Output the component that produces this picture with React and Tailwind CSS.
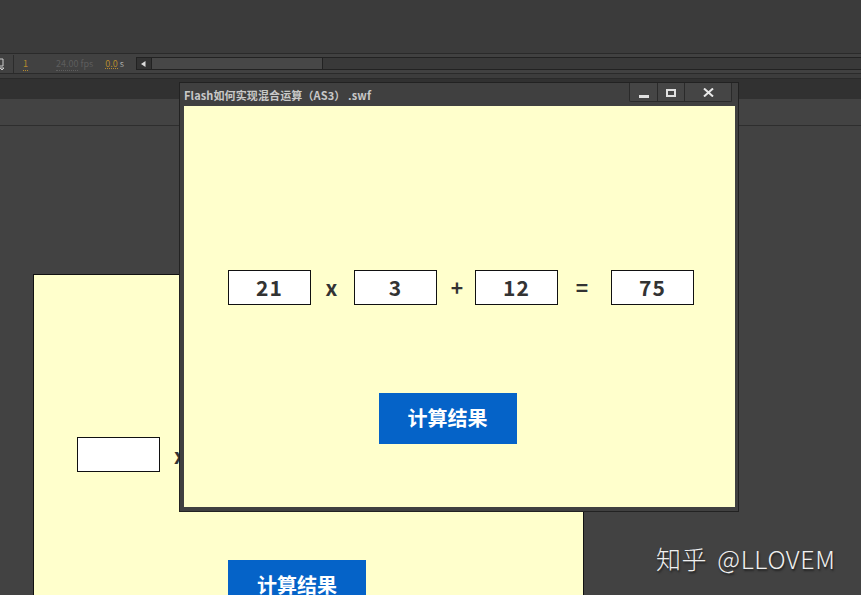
const SANS = 'font-["Noto_Sans_CJK_SC","Noto_Sans",sans-serif]';

function Field({ value, className = "" }) {
  return (
    <div className={`w-[83px] h-[35px] bg-white border border-[#111] flex items-center justify-center text-[21px] font-bold text-[#333] tracking-[1px] leading-none ${className}`}>
      {value}
    </div>
  );
}

function Op({ children, className = "" }) {
  return <div className={`text-[21px] font-bold text-[#333] leading-none text-center ${className}`}>{children}</div>;
}

function Calc() {
  return (
    <button className="w-[138px] h-[51px] pb-[2px] bg-[#0563c8] text-white text-[20px] font-bold flex items-center justify-center leading-none">
      计算结果
    </button>
  );
}

export default function App() {
  return (
    <div className={`relative w-[861px] h-[595px] overflow-hidden bg-[#424242] ${SANS}`}>
      {/* Application chrome */}
      <div className="h-[53px] bg-[#3b3b3b]" />
      <div className="h-[21px] bg-[#414141] border-y border-[#2a2a2a] flex items-center text-[9px] leading-none">
        <svg width="6" height="14" viewBox="0 0 6 14" className="ml-0 text-[#ccc]">
          <path d="M0 2h3v7H0M0 11h4l-2 2z" fill="none" stroke="currentColor" />
        </svg>
        <div className="ml-[7px] w-px h-[18px] bg-[#2c2c2c]" />
        <span className="ml-[9px] w-[33px] text-[#b58a2e]"><span className="border-b border-dotted border-[#b58a2e]">1</span></span>
        <span className="text-[#5d5d5d]"><span className="border-b border-dotted border-[#5d5d5d]">24.00</span> fps</span>
        <span className="ml-[12px] text-[#b58a2e] border-b border-dotted border-[#b58a2e]">0.0</span>
        <span className="ml-[2px] text-[#aaa]">s</span>
        <div className="ml-[12px] flex-1 h-[13px] flex bg-[#393939] border-y border-[#222]">
          <div className="w-[15px] bg-[#333] flex items-center justify-center border-l border-[#222]">
            <svg width="5" height="6" viewBox="0 0 5 6"><path d="M4.5 0v6L0 3z" fill="#ddd" /></svg>
          </div>
          <div className="w-[172px] bg-[#474747] border-x border-[#222]" />
        </div>
      </div>
      <div className="h-[5px] bg-[#3c3c3c] border-b border-[#2a2a2a]" />
      <div className="h-[20px] bg-[#313131]" />
      <div className="h-[27px] bg-[#434343] border-b border-[#2e2e2e]" />

      {/* Stage behind */}
      <div className="absolute left-[33px] top-[274px] w-[551px] h-[340px] bg-[#ffffcc] border border-[#111]">
        <Field value="" className="absolute left-[43px] top-[162px]" />
        <Op className="absolute left-[140px] top-[170px]">x</Op>
        <div className="absolute left-[194px] top-[285px]"><Calc /></div>
      </div>

      {/* Player window */}
      <div className="absolute left-[179px] top-[82px] w-[560px] h-[430px] bg-[#404040] border border-[#222] flex flex-col pl-[4px] pr-[3px] pb-[4px]">
        <div className="h-[23px] shrink-0 flex items-start justify-between">
          <span className="mt-[5px] text-[11px] font-bold tracking-[0.12px] text-[#c8c8c8] leading-[14px]">Flash如何实现混合运算（AS3）&nbsp;.swf</span>
          <div className="mr-[3px] h-[19px] flex rounded-b-[2px] border border-t-0 border-[#2a2a2a] bg-[#454545]">
            <div className="w-[28px] flex items-end justify-center pb-[3px] border-r border-[#2a2a2a]">
              <div className="w-[10px] h-[3px] bg-[#e0e0e0]" />
            </div>
            <div className="w-[27px] flex items-center justify-center pt-[2px] border-r border-[#2a2a2a]">
              <div className="w-[10px] h-[8px] border-2 border-[#e0e0e0]" />
            </div>
            <div className="w-[46px] flex items-center justify-center">
              <svg width="11" height="9" viewBox="0 0 11 9"><path d="M1 .5l9 8M10 .5l-9 8" stroke="#e8e8e8" strokeWidth="2" /></svg>
            </div>
          </div>
        </div>
        <div className="flex-1 bg-[#ffffcc] flex flex-col items-center">
          <div className="mt-[164px] w-full pl-[44px] flex items-center">
            <Field value="21" />
            <Op className="w-[43px] pr-[2px]">x</Op>
            <Field value="3" />
            <Op className="w-[38px] pl-[2px]">+</Op>
            <Field value="12" />
            <Op className="w-[53px] pr-[5px]">=</Op>
            <Field value="75" />
          </div>
          <div className="mt-[88px] ml-[-24px]"><Calc /></div>
        </div>
      </div>

      {/* Watermark */}
      <div className="absolute left-[656px] top-[542px] text-[25px] leading-[32px] font-light tracking-[0.6px] [word-spacing:4px] text-[#f0f0f0] [text-shadow:1px_2px_2px_rgba(0,0,0,0.5)] whitespace-nowrap">
        知乎 @LLOVEM
      </div>
    </div>
  );
}
